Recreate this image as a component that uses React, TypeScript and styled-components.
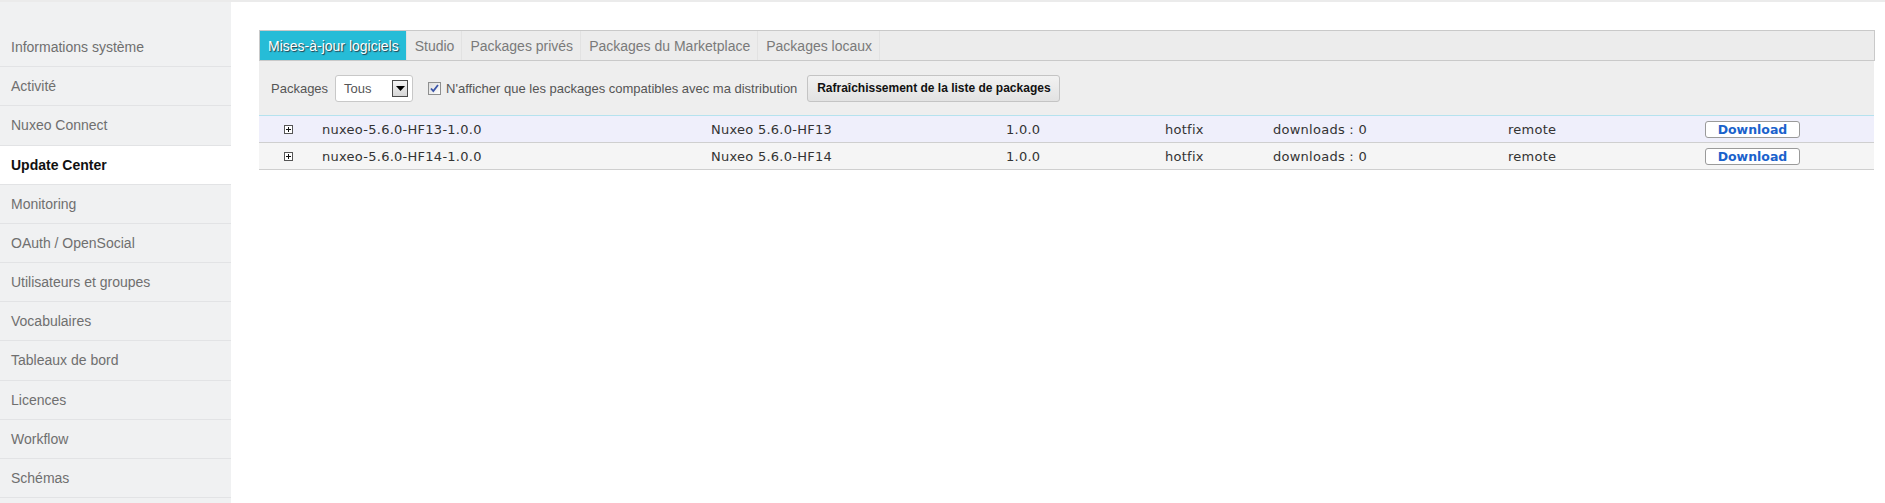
import React from "react";
import styled, { createGlobalStyle } from "styled-components";

const GlobalStyle = createGlobalStyle`
  html, body { margin: 0; padding: 0; background: #ffffff; }
  body { font-family: "Liberation Sans", Arial, sans-serif; }
  * { box-sizing: border-box; }
`;

const Page = styled.div`
  display: flex;
  width: 1885px;
  height: 503px;
  border-top: 2px solid #ebebeb;
  overflow: hidden;
`;

const Sidebar = styled.nav`
  width: 231px;
  flex: none;
  background: #f0f1f2;
  padding-top: 26px;
  display: flex;
  flex-direction: column;
`;

const NavItem = styled.div<{ $active?: boolean }>`
  height: 39.18px;
  flex: none;
  display: flex;
  align-items: center;
  padding-left: 11px;
  border-bottom: 1px solid #e2e3e5;
  font-size: 14px;
  color: ${(p) => (p.$active ? "#111111" : "#6f6f6f")};
  font-weight: ${(p) => (p.$active ? 700 : 400)};
  background: ${(p) => (p.$active ? "#ffffff" : "transparent")};
`;

const Main = styled.main`
  flex: 1;
  padding: 28px 10px 0 28px;
`;

const TabBar = styled.div`
  display: flex;
  height: 31px;
  border: 1px solid #c9c9c9;
  background: #ececec;
`;

const Tab = styled.div<{ $active?: boolean }>`
  height: 29px;
  display: flex;
  align-items: center;
  padding: 0 7px 0 8px;
  font-size: 14px;
  border-right: 1px solid #e2e2e2;
  color: ${(p) => (p.$active ? "#ffffff" : "#7a7a7a")};
  background: ${(p) => (p.$active ? "#26bcd7" : "transparent")};
  text-shadow: ${(p) => (p.$active ? "1px 1px 1px #2a3a44" : "none")};
`;

const FilterBar = styled.div`
  height: 54px;
  margin-right: 1px;
  background: #eeeeee;
  display: flex;
  align-items: center;
  padding-left: 12px;
  font-size: 13px;
  color: #555555;
`;

const FilterLabel = styled.span`
  margin-right: 7px;
`;

const Select = styled.div`
  width: 78px;
  height: 27px;
  background: #ffffff;
  border: 1px solid #c8c8c8;
  border-radius: 3px;
  display: flex;
  align-items: center;
  padding-left: 8px;
  margin-right: 15px;
  color: #555555;
`;

const SelectText = styled.span`
  flex: 1;
`;

const SelectArrow = styled.span`
  width: 16px;
  height: 17px;
  margin-right: 4px;
  border: 1px solid #4a4a4a;
  background: linear-gradient(#f4f4f4, #d6d6d6);
  display: flex;
  align-items: center;
  justify-content: center;
`;

const CheckLabel = styled.label`
  display: flex;
  align-items: center;
  gap: 5px;
  margin-right: 10px;
`;

const CheckBox = styled.span`
  width: 13px;
  height: 13px;
  border: 1px solid #8e8f8f;
  background: linear-gradient(135deg, #dcdcdc, #ffffff);
  display: flex;
  align-items: center;
  justify-content: center;
`;

const RefreshButton = styled.button`
  height: 27px;
  width: 253px;
  padding: 0;
  border: 1px solid #c4c4c4;
  border-radius: 3px;
  background: linear-gradient(#f2f2f2, #e2e2e2);
  font-family: "Liberation Sans", Arial, sans-serif;
  font-weight: 700;
  font-size: 12px;
  color: #111111;
`;

const Table = styled.div`
  margin-right: 1px;
  border-top: 1px solid #b5e2ee;
  font-family: "DejaVu Sans", Verdana, sans-serif;
  font-size: 13px;
  letter-spacing: 0.26px;
  color: #333333;
`;

const Row = styled.div<{ $alt?: boolean }>`
  height: 27px;
  display: grid;
  grid-template-columns: 63px 389px 295px 159px 108px 235px 197px 1fr;
  align-items: center;
  background: ${(p) => (p.$alt ? "#f5f5f5" : "#efeffb")};
  border-bottom: 1px solid #cfcfcf;
`;

const ExpandCell = styled.div`
  padding-left: 25px;
  display: flex;
  align-items: center;
`;

const Cell = styled.div`
  white-space: nowrap;
`;

const DownloadButton = styled.button`
  width: 95px;
  height: 17px;
  padding: 0;
  background: #ffffff;
  border: 1px solid #9a9a9a;
  border-radius: 3px;
  font-family: "DejaVu Sans", Verdana, sans-serif;
  font-weight: 700;
  font-size: 12.5px;
  color: #1a62cc;
  display: flex;
  align-items: center;
  justify-content: center;
`;

const PlusIcon = () => (
  <svg width="9" height="9" viewBox="0 0 9 9">
    <rect x="0.5" y="0.5" width="8" height="8" fill="#ffffff" stroke="#555555" />
    <path d="M2 4.5h5M4.5 2v5" stroke="#111111" strokeWidth="1" />
  </svg>
);

const navItems = [
  "Informations système",
  "Activité",
  "Nuxeo Connect",
  "Update Center",
  "Monitoring",
  "OAuth / OpenSocial",
  "Utilisateurs et groupes",
  "Vocabulaires",
  "Tableaux de bord",
  "Licences",
  "Workflow",
  "Schémas",
  "",
];

const tabs = [
  "Mises-à-jour logiciels",
  "Studio",
  "Packages privés",
  "Packages du Marketplace",
  "Packages locaux",
];

const packages = [
  { name: "nuxeo-5.6.0-HF13-1.0.0", target: "Nuxeo 5.6.0-HF13" },
  { name: "nuxeo-5.6.0-HF14-1.0.0", target: "Nuxeo 5.6.0-HF14" },
];

export default function App() {
  return (
    <>
      <GlobalStyle />
      <Page>
        <Sidebar>
          {navItems.map((item, i) => (
            <NavItem key={i} $active={item === "Update Center"}>
              {item}
            </NavItem>
          ))}
        </Sidebar>
        <Main>
          <TabBar>
            {tabs.map((t, i) => (
              <Tab key={t} $active={i === 0}>
                {t}
              </Tab>
            ))}
          </TabBar>
          <FilterBar>
            <FilterLabel>Packages</FilterLabel>
            <Select>
              <SelectText>Tous</SelectText>
              <SelectArrow>
                <svg width="9" height="5" viewBox="0 0 9 5">
                  <path d="M0 0h9L4.5 5z" fill="#000000" />
                </svg>
              </SelectArrow>
            </Select>
            <CheckLabel>
              <CheckBox>
                <svg width="9" height="9" viewBox="0 0 9 9">
                  <path d="M1 4.5l2.3 2.6L8 1" fill="none" stroke="#3b55a8" strokeWidth="1.8" />
                </svg>
              </CheckBox>
              N'afficher que les packages compatibles avec ma distribution
            </CheckLabel>
            <RefreshButton>Rafraîchissement de la liste de packages</RefreshButton>
          </FilterBar>
          <Table>
            {packages.map((p, i) => (
              <Row key={p.name} $alt={i % 2 === 1}>
                <ExpandCell>
                  <PlusIcon />
                </ExpandCell>
                <Cell>{p.name}</Cell>
                <Cell>{p.target}</Cell>
                <Cell>1.0.0</Cell>
                <Cell>hotfix</Cell>
                <Cell>downloads : 0</Cell>
                <Cell>remote</Cell>
                <Cell>
                  <DownloadButton>Download</DownloadButton>
                </Cell>
              </Row>
            ))}
          </Table>
        </Main>
      </Page>
    </>
  );
}
